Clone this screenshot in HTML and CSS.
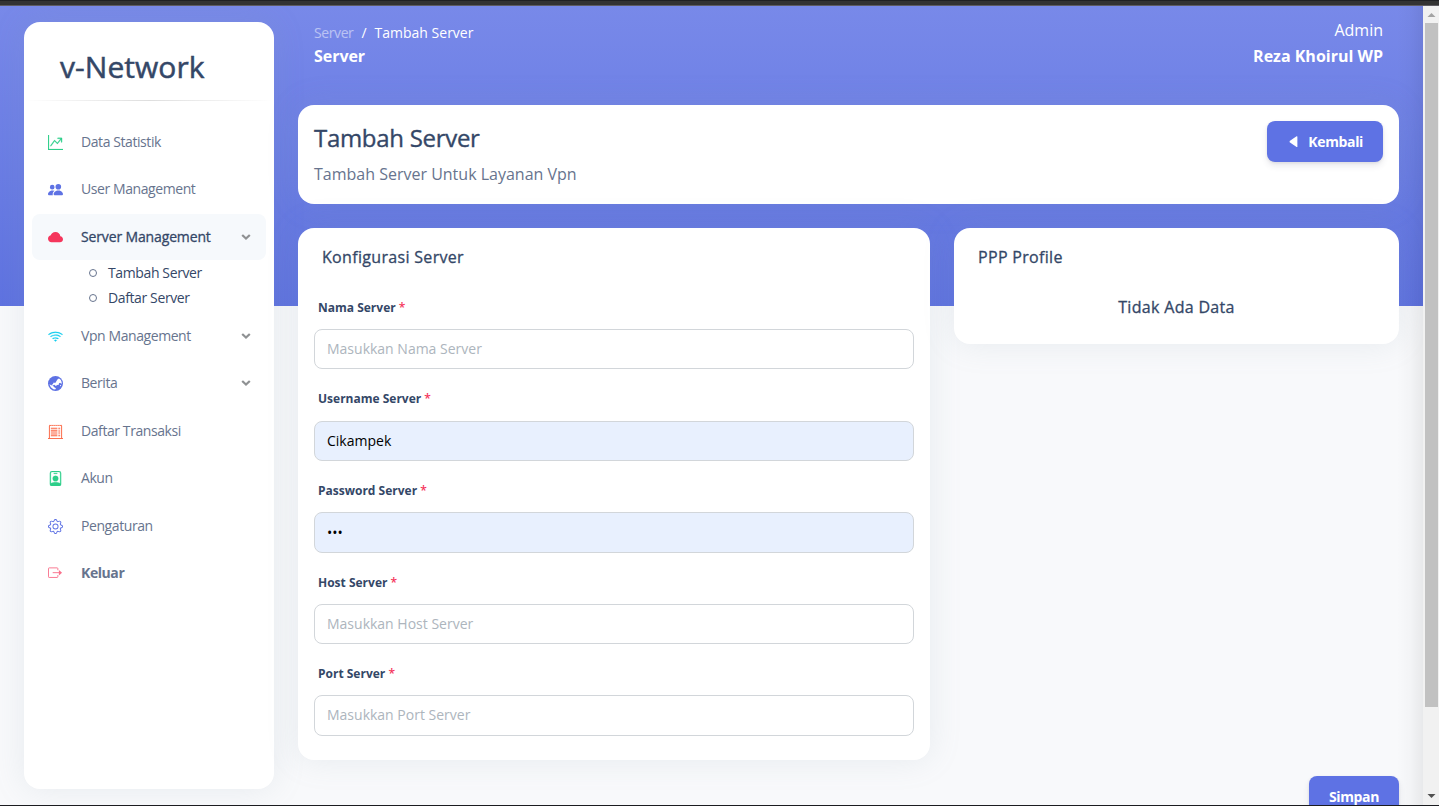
FILE: index.html
```html
<!DOCTYPE html>
<html lang="id">
<head>
<meta charset="utf-8">
<title>Tambah Server</title>
<link rel="stylesheet" href="styles.css">
</head>
<body>
<div class="window">
  <div class="chrome"></div>
  <div class="viewport">
    <div class="page">
      <aside class="sidebar">
        <h1 class="brand">v-Network</h1>
        <hr class="divider">
        <nav class="nav">
          <a class="nav-item"><svg class="icon green bold" viewBox="0 0 16 16"><path d="M0 0h1v15h15v1H0zm10 3.5a.5.5 0 0 1 .5-.5h4a.5.5 0 0 1 .5.5v4a.5.5 0 0 1-1 0V4.9l-3.613 4.417a.5.5 0 0 1-.74.037L7.06 6.767l-3.656 5.027a.5.5 0 0 1-.808-.588l4-5.5a.5.5 0 0 1 .758-.06l2.609 2.61L13.445 4H10.5a.5.5 0 0 1-.5-.5"/></svg><span>Data Statistik</span></a>
          <a class="nav-item"><svg class="icon blue" viewBox="0 0 16 16"><path d="M7 14s-1 0-1-1 1-4 5-4 5 3 5 4-1 1-1 1H7z M11 8a3 3 0 1 0 0-6 3 3 0 0 0 0 6z M5.216 14A2.238 2.238 0 0 1 5 13c0-1.355.68-2.75 1.936-3.72A6.325 6.325 0 0 0 5 9c-4 0-5 3-5 4s1 1 1 1h4.216z M4.5 8a2.5 2.5 0 1 0 0-5 2.5 2.5 0 0 0 0 5z"/></svg><span>User Management</span></a>
          <a class="nav-item active"><svg class="icon red" viewBox="0 0 16 16"><path d="M4.406 3.342A5.53 5.53 0 0 1 8 2c2.69 0 4.923 2 5.166 4.579C14.758 6.804 16 8.137 16 9.773 16 11.569 14.502 13 12.687 13H3.781C1.708 13 0 11.366 0 9.318c0-1.763 1.266-3.223 2.942-3.593.143-.863.698-1.723 1.464-2.383z"/></svg><span>Server Management</span><svg class="caret" viewBox="0 0 10 8"><path d="M1.200 2l3.800 3.600 3.800-3.600"/></svg></a>
          <div class="subnav">
            <a class="sub-item">Tambah Server</a>
            <a class="sub-item">Daftar Server</a>
          </div>
          <a class="nav-item"><svg class="icon cyan bold" viewBox="0 0 16 16"><path d="M15.384 6.115a.485.485 0 0 0-.047-.736A12.444 12.444 0 0 0 8 3C5.259 3 2.723 3.882.663 5.379a.485.485 0 0 0-.048.736.518.518 0 0 0 .668.05A11.448 11.448 0 0 1 8 4c2.507 0 4.827.802 6.716 2.164.205.148.49.13.668-.049z M13.229 8.271a.482.482 0 0 0-.063-.745A9.455 9.455 0 0 0 8 6c-1.905 0-3.68.56-5.166 1.526a.48.48 0 0 0-.063.745.525.525 0 0 0 .652.065A8.46 8.46 0 0 1 8 7a8.46 8.46 0 0 1 4.576 1.336c.206.132.48.108.653-.065zm-2.183 2.183c.226-.226.185-.605-.1-.75A6.473 6.473 0 0 0 8 9c-1.06 0-2.062.254-2.946.704-.285.145-.326.524-.1.75l.015.015c.16.16.407.19.611.09A5.478 5.478 0 0 1 8 10c.868 0 1.69.201 2.42.56.203.1.45.07.61-.091l.016-.015zM9.06 12.44c.196-.196.198-.52-.04-.66A1.99 1.99 0 0 0 8 11.5a1.99 1.99 0 0 0-1.02.28c-.238.14-.236.464-.04.66l.706.706a.5.5 0 0 0 .707 0l.707-.707z"/></svg><span>Vpn Management</span><svg class="caret" viewBox="0 0 10 8"><path d="M1.200 2l3.800 3.600 3.800-3.600"/></svg></a>
          <a class="nav-item"><svg class="icon blue" viewBox="0 0 16 16"><circle cx="8" cy="8" r="8"/><path class="land" d="M10 3.6l1.5-1 1.2.5 1.1 1.5.8 2-.2 1.8-1.5-1.2-1.2.6-.2 1.6-1.7.2-1.5 1.1-1.4-1.3-1.9.6L3.8 9.600l1.3-.9 1-1.700 1.600.4 1.200-1.800z M1.500 8.700l2 1.200 1.700.4 1.500 1.800 1.800 1-.8 1.300-2-.3-2.700-2.200z M12.600 9.800l1.600-.4-.8 1.700z"/></svg><span>Berita</span><svg class="caret" viewBox="0 0 10 8"><path d="M1.200 2l3.800 3.600 3.800-3.600"/></svg></a>
          <a class="nav-item"><svg class="icon orange" viewBox="0 0 16 16"><path d="M3 4h7v1.100H3zM3 6h7v1.100H3zM3 8h7v1.100H3zM3 10h7v1.100H3zM3 12h7v1.100H3zM11 4h2v1h-2zM11 6h2v1h-2zM11 8h2v1h-2zM11 10h2v1h-2zM11 12h2v1h-2z"/><path class="stroke" d="M0 15.500h16M1.500 15.500V2l.5-1 1 1 1-1 1 1 1-1 1 1 1-1 1 1 1-1 1 1 1-1 1 1 1-1 .5 1v13.500"/></svg><span>Daftar Transaksi</span></a>
          <a class="nav-item"><svg class="icon green bold" viewBox="0 0 16 16"><path d="M6.500 2a.5.5 0 0 0 0 1h3a.5.5 0 0 0 0-1h-3zM11 8a3 3 0 1 1-6 0 3 3 0 0 1 6 0z"/><path d="M4.500 0A2.500 2.500 0 0 0 2 2.500V14a2 2 0 0 0 2 2h8a2 2 0 0 0 2-2V2.500A2.500 2.500 0 0 0 11.500 0h-7zM3 2.500A1.500 1.500 0 0 1 4.500 1h7A1.500 1.500 0 0 1 13 2.500v10.795a4.200 4.200 0 0 0-.776-.492C11.392 12.387 10.063 12 8 12s-3.392.387-4.224.803a4.200 4.200 0 0 0-.776.492V2.500z"/></svg><span>Akun</span></a>
          <a class="nav-item"><svg class="icon blue" viewBox="0 0 16 16"><path d="M8 4.754a3.246 3.246 0 1 0 0 6.492 3.246 3.246 0 0 0 0-6.492zM5.754 8a2.246 2.246 0 1 1 4.492 0 2.246 2.246 0 0 1-4.492 0z"/><path d="M9.796 1.343c-.527-1.79-3.065-1.79-3.592 0l-.094.319a.873.873 0 0 1-1.255.52l-.292-.16c-1.64-.892-3.433.902-2.54 2.541l.159.292a.873.873 0 0 1-.52 1.255l-.319.094c-1.79.527-1.79 3.065 0 3.592l.319.094a.873.873 0 0 1 .52 1.255l-.16.292c-.892 1.64.901 3.434 2.541 2.54l.292-.159a.873.873 0 0 1 1.255.52l.094.319c.527 1.79 3.065 1.79 3.592 0l.094-.319a.873.873 0 0 1 1.255-.52l.292.16c1.64.893 3.434-.902 2.54-2.541l-.159-.292a.873.873 0 0 1 .52-1.255l.319-.094c1.79-.527 1.79-3.065 0-3.592l-.319-.094a.873.873 0 0 1-.52-1.255l.16-.292c.893-1.64-.902-3.433-2.541-2.54l-.292.159a.873.873 0 0 1-1.255-.52l-.094-.319zm-2.633.283c.246-.835 1.428-.835 1.674 0l.094.319a1.873 1.873 0 0 0 2.693 1.115l.291-.16c.764-.415 1.6.42 1.184 1.185l-.159.292a1.873 1.873 0 0 0 1.116 2.692l.318.094c.835.246.835 1.428 0 1.674l-.319.094a1.873 1.873 0 0 0-1.115 2.693l.16.291c.415.764-.42 1.6-1.185 1.184l-.291-.159a1.873 1.873 0 0 0-2.693 1.116l-.094.318c-.246.835-1.428.835-1.674 0l-.094-.319a1.873 1.873 0 0 0-2.692-1.115l-.292.16c-.764.415-1.6-.42-1.184-1.185l.159-.291A1.873 1.873 0 0 0 1.945 8.93l-.319-.094c-.835-.246-.835-1.428 0-1.674l.319-.094A1.873 1.873 0 0 0 3.06 4.377l-.16-.292c-.415-.764.42-1.6 1.185-1.184l.292.159a1.873 1.873 0 0 0 2.692-1.115l.094-.319z"/></svg><span>Pengaturan</span></a>
          <a class="nav-item strong"><svg class="icon pink" viewBox="0 0 16 16"><path class="stroke" d="M10.500 4.500V2.700a.7.7 0 0 0-.7-.7H1.200a.7.7 0 0 0-.7.7v8.800a.7.7 0 0 0 .7.7h8.600a.7.700 0 0 0 .7-.7v-1.800M5 7.100h8.500"/><path d="M11.600 4.200l3.400 2.900-3.400 2.900z"/></svg><span>Keluar</span></a>
        </nav>
      </aside>
      <main class="main">
        <header class="topbar">
          <div>
            <div class="crumbs"><span class="crumb-link">Server</span><span class="slash">/</span><span>Tambah Server</span></div>
            <div class="page-name">Server</div>
          </div>
          <div class="user"><span>Admin</span><b>Reza Khoirul WP</b></div>
        </header>
        <section class="card intro">
          <div>
            <h2>Tambah Server</h2>
            <p>Tambah Server Untuk Layanan Vpn</p>
          </div>
          <button class="btn back"><svg class="tri" viewBox="0 0 8 10"><path d="M7.500 .5v9.500L6.800 10 .5 5.600v-1L6.800 .2z"/></svg>Kembali</button>
        </section>
        <div class="columns">
          <section class="card form">
            <h3>Konfigurasi Server</h3>
            <div class="field"><label>Nama Server <i>*</i></label><input type="text" placeholder="Masukkan Nama Server"></div>
            <div class="field"><label>Username Server <i>*</i></label><input class="filled" type="text" value="Cikampek"></div>
            <div class="field"><label>Password Server <i>*</i></label><input class="filled" type="password" value="abc"></div>
            <div class="field"><label>Host Server <i>*</i></label><input type="text" placeholder="Masukkan Host Server"></div>
            <div class="field"><label>Port Server <i>*</i></label><input type="text" placeholder="Masukkan Port Server"></div>
          </section>
          <section class="card profile">
            <h3>PPP Profile</h3>
            <p class="empty">Tidak Ada Data</p>
          </section>
        </div>
        <div class="actions"><button class="btn save">Simpan</button></div>
      </main>
    </div>
    <div class="scrollbar">
      <svg class="arrow" viewBox="0 0 16 17"><path fill="#a3a3a3" d="M8.500 7l4 4h-8z"/></svg>
      <div class="thumb"></div>
      <svg class="arrow end" viewBox="0 0 16 17"><path fill="#505050" d="M4.500 6h8l-4 4z"/></svg>
    </div>
  </div>
</div>
</body>
</html>
```
FILE: styles.css
```css
* { box-sizing: border-box; }
body {
  margin: 0;
  font-family: "Open Sans", "Noto Sans", sans-serif;
  color: #344767;
  overflow: hidden;
}
h1, h2, h3, p { margin: 0; }
.window { height: 806px; display: flex; flex-direction: column; background: #1b1c20; padding-bottom: 1px; }
.chrome { height: 6px; flex: none; background: #333; border-top: 1px solid #202124; border-bottom: 1px solid #5e5c62; }
.viewport { flex: 1; min-height: 0; display: flex; overflow: hidden; }

.page {
  position: relative;
  flex: 1;
  display: flex;
  gap: 24px;
  padding: 16px 24px 16px 24px;
  overflow: hidden;
  background: linear-gradient(#7889e9, #5e72e0) top / 100% 300px no-repeat #f8f9fb;
}
.page::after {
  content: "";
  position: absolute;
  inset: 0 0 0 auto;
  width: 26px;
  background: linear-gradient(to right, rgba(0, 0, 0, 0), rgba(0, 0, 0, .02) 50%, rgba(0, 0, 0, .065));
}

.sidebar {
  width: 250px;
  height: 767px;
  flex: none;
  background: #fff;
  border-radius: 16px;
  box-shadow: 0 0 32px rgba(136, 152, 170, .15);
}
.brand { margin: 24px 0 0 36px; font-size: 30px; line-height: 42px; font-weight: 400; letter-spacing: .05px; -webkit-text-stroke: .5px currentColor; }
.divider { height: 1px; border: 0; margin: 12px 0 18px; background: linear-gradient(90deg, rgba(0,0,0,0), rgba(0,0,0,.13), rgba(0,0,0,0)); }
.nav { display: flex; flex-direction: column; gap: 2px; padding: 0 8px; }
.nav-item {
  height: 45.5px;
  display: flex;
  align-items: center;
  padding: 0 15px 0 16px;
  border-radius: 8px;
  font-size: 14px;
  letter-spacing: -.42px;
  color: #67748e;
}
.nav-item span { flex: 1; margin: 0 0 1px 18px; }
.nav-item.active { background: #f6f9fc; color: #344767; letter-spacing: -.14px; -webkit-text-stroke: .3px currentColor; }
.nav-item.strong { font-weight: 700; }
.icon { width: 15px; height: 15px; margin-top: 1px; fill: currentColor; stroke-width: 0; }
.icon.bold { stroke: currentColor; stroke-width: .25; }
.icon .stroke { fill: none; stroke: currentColor; stroke-width: 1; }
.icon .land { fill: #fff; }
.caret { width: 10px; height: 8px; fill: none; stroke: #8f9193; stroke-width: 2.2; }
.green { color: #2dce89; }
.blue { color: #5e72e4; }
.red { color: #f5365c; }
.cyan { color: #11cdef; }
.orange { color: #fb6340; }
.pink { color: #f9718c; }
.subnav { height: 49.5px; padding-left: 57px; margin-top: -2px; margin-bottom: 2px; }
.sub-item { display: flex; align-items: center; height: 25px; font-size: 14px; letter-spacing: -.38px; }
.sub-item::before { content: ""; width: 8px; height: 8px; box-sizing: border-box; border: 1px solid #67748e; border-radius: 50%; margin: 1px 11px 0 0; }

.main { flex: 1; min-width: 0; }
.topbar { height: 83px; display: flex; justify-content: space-between; padding: 0 16px; color: #fff; }
.crumbs { font-size: 14px; line-height: 21px; display: flex; }
.crumb-link { opacity: .5; letter-spacing: -.4px; }
.slash { margin: 0 8px; }
.page-name { font-size: 16px; line-height: 26px; font-weight: 700; letter-spacing: -.05px; }
.user { display: flex; flex-direction: column; align-items: flex-end; font-size: 16px; line-height: 26px; margin-top: -5px; }
.card { background: #fff; border-radius: 16px; box-shadow: 0 0 32px rgba(136, 152, 170, .15); }
.intro { height: 99px; padding: 16px; display: flex; justify-content: space-between; align-items: flex-start; }
.intro h2 { font-size: 24px; line-height: 34px; font-weight: 400; letter-spacing: -.3px; -webkit-text-stroke: .35px currentColor; }
.intro p { font-size: 16px; line-height: 26px; margin-top: 6px; color: #67748e; }
.btn {
  height: 41px;
  border: 0;
  border-radius: 8px;
  background: #5e72e4;
  color: #fff;
  font: 700 14px "Open Sans", "Noto Sans", sans-serif;
  letter-spacing: -.35px;
  box-shadow: 0 4px 6px rgba(50, 50, 93, .1), 0 1px 3px rgba(0, 0, 0, .08);
}
.back { width: 116px; padding: 0 20px 0 22px; display: flex; align-items: center; justify-content: space-between; }
.tri { width: 9px; height: 11px; fill: #fff; }
.columns { display: grid; grid-template-columns: 632px 445px; gap: 24px; align-items: start; margin-top: 24px; }
.card h3, .empty { font-size: 16px; line-height: 26px; font-weight: 400; letter-spacing: .32px; -webkit-text-stroke: .3px currentColor; }
.form { height: 532px; padding: 16px; }
.form h3, .profile h3 { padding-left: 8px; }
.form h3 { margin-bottom: 28.85px; }
.field { height: 91.6px; }
.field label { display: block; height: 30.15px; padding-left: 4px; font-size: 12px; line-height: 18px; font-weight: 700; }
.field i { color: #f5365c; font-style: normal; font-weight: 600; }
.field input {
  display: block;
  width: 100%;
  height: 40.4px;
  padding: 0 12px 1.6px;
  border: 1px solid #d2d6da;
  border-radius: 8px;
  background: #fff;
  color: #000;
  font: 14px "Open Sans", "Noto Sans", sans-serif;
  outline: 0;
}
.field input::placeholder { color: #adb5bd; opacity: 1; }
.field input.filled { background: #e8f0fe; padding-bottom: 0; }
.profile { height: 116px; padding: 16px; }
.empty { margin-top: 24px; text-align: center; }
.actions { display: flex; justify-content: flex-end; margin-top: 16px; }
.save { width: 90px; }

.scrollbar { width: 16px; flex: none; display: flex; flex-direction: column; background: #f1f1f1; }
.arrow { width: 16px; height: 17px; flex: none; }
.thumb { height: 684px; margin: 0 1px 0 2px; background: #c1c1c1; }
.arrow.end { margin-top: auto; }
```
